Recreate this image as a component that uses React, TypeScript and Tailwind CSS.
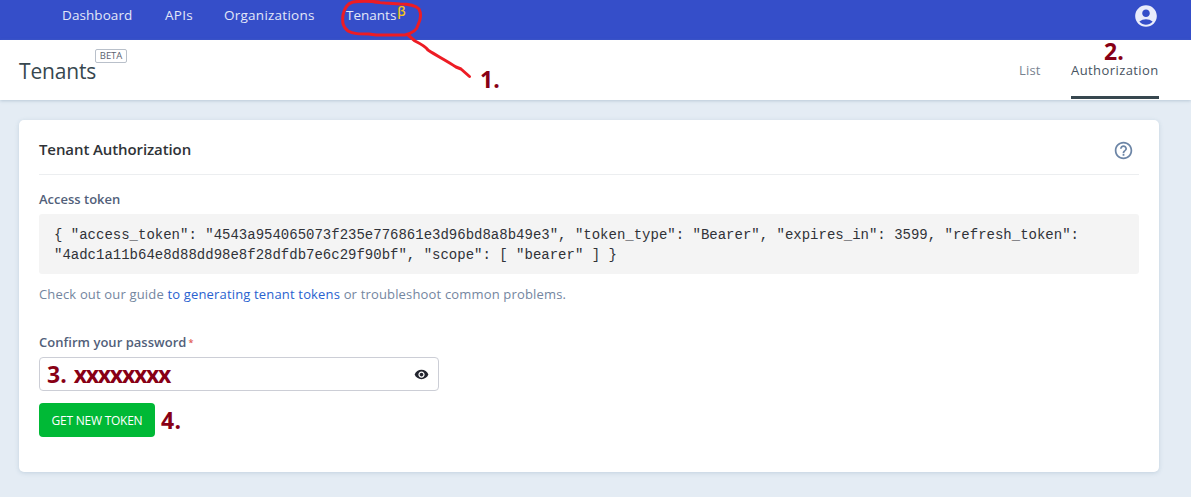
import { MdAccountCircle, MdHelpOutline, MdVisibility } from "react-icons/md";

const NOTE = "font-bold text-[#880015] whitespace-nowrap";

function Header() {
  return (
    <header className="relative h-10 bg-[#354ec9] text-[13.5px] leading-[18px] text-[#e3e7f8]">
      <nav className="flex h-[31px] items-center pl-[62px]">
        <a className="-mt-[2px] w-[103px] tracking-[0.08px]">Dashboard</a>
        <a className="-mt-[2px] w-[59px] tracking-[0.3px]">APIs</a>
        <a className="-mt-[2px] w-[122px] tracking-[0.25px]">Organizations</a>
        <a className="-mt-[2px] flex">
          Tenants
          <span className="-mt-[3px] ml-px text-[13px] leading-[17px] font-semibold text-[#f5c518]">β</span>
        </a>
        <MdAccountCircle className="ml-auto mr-[32px] size-[26px] text-[#e9ecfb]" />
      </nav>
      <svg
        className="absolute left-[320px] top-0 z-10"
        width="200"
        height="100"
        fill="none"
        stroke="#ed1c24"
        strokeWidth="3"
        strokeLinecap="round"
        strokeLinejoin="round"
      >
        <path d="M59 2C50 1 39 1 33 2C26 4 24 9 23 15C22 23 23 27 28 31C33 34 39 34 49 34L56 35L85 35C93 33 97 30 98 25C101 19 101 13 99 9C95 5 88 4 80 4L65 3L54 2" />
        <path d="M88 35L95 41C101 44 105 46 108 50C117 56 127 61 136 67L141 69L149.5 76.5" />
      </svg>
    </header>
  );
}

function TitleBar() {
  return (
    <div className="relative flex h-[60px] bg-white pl-[19px] pr-8 shadow-[0_1px_3px_rgba(120,150,175,0.4)]">
      <h1 className="mt-[16px] w-[77px] text-[21px] leading-[30px] font-medium tracking-[-0.15px] text-[#37474f]">
        Tenants
      </h1>
      <span className="-ml-px mt-[9px] flex h-[14px] w-8 items-center justify-center rounded-[2px] border border-[#b9c0ca] text-[9.5px] leading-3 tracking-[-0.1px] text-[#5b6270]">
        BETA
      </span>
      <span className={`absolute left-[480px] top-[24px] text-[23px] leading-[30px] ${NOTE}`}>1.</span>
      <div className="ml-auto flex text-[13px] leading-5">
        <a className="mr-[30px] w-[22px] pt-5 tracking-[0.2px] text-[#78828f]">List</a>
        <a className="h-[59px] w-[88px] border-b-3 border-[#37474f] pt-5 tracking-[0.42px] whitespace-nowrap text-[#47535f]">
          Authorization
        </a>
      </div>
      <span className={`absolute left-[1104px] top-[-4px] text-[23px] leading-[30px] ${NOTE}`}>2.</span>
    </div>
  );
}

export default function App() {
  return (
    <div className="h-[497px] w-[1191px] overflow-hidden bg-[#e4ecf4] font-['Open_Sans','Noto_Sans',sans-serif]">
      <Header />
      <TitleBar />
      <main className="ml-[19px] mt-5 flex h-[352px] w-[1140px] flex-col rounded-[5px] bg-white px-5 shadow-[0_1px_4px_rgba(120,150,175,0.3)]">
        <div className="flex h-[55px] items-center justify-between border-b border-[#eceef0] pt-[5px] pr-[5px]">
          <h2 className="text-[15px] font-semibold tracking-[-0.1px] text-[#2f3337]">Tenant Authorization</h2>
          <MdHelpOutline className="mt-px size-[21px] text-[#6c85a6]" />
        </div>
        <h3 className="mt-[14px] text-[13px] leading-5 font-semibold text-[#525f7a]">Access token</h3>
        <pre className="mt-[5px] h-[60px] rounded-[3px] bg-[#f4f4f4] px-[15px] pt-[11px] font-['Liberation_Mono',monospace] text-[14px] leading-5 text-[#303238]">
          {`{ "access_token": "4543a954065073f235e776861e3d96bd8a8b49e3", "token_type": "Bearer", "expires_in": 3599, "refresh_token":\n"4adc1a11b64e8d88dd98e8f28dfdb7e6c29f90bf", "scope": [ "bearer" ] }`}
        </pre>
        <p className="mt-[10px] text-[13px] leading-5 tracking-[0.165px] text-[#7486a0]">
          Check out our guide <a className="text-[#2962cf]">to generating tenant tokens</a> or troubleshoot common problems.
        </p>
        <label className="mt-[28px] text-[13px] leading-5 font-semibold tracking-[0.03px] text-[#525f7a]">
          Confirm your password<span className="ml-[2px] align-[1px] text-[9px] leading-3 text-[#e0574f]">*</span>
        </label>
        <div className="mt-[5px] flex h-[34px] w-[400px] items-center rounded-[4px] border border-[#ccced6] pl-[7px] pr-[9px]">
          <span className={`-mt-px text-[23px] leading-[30px] ${NOTE}`}>
            3. <span className="ml-px tracking-[-1.25px]">xxxxxxxx</span>
          </span>
          <MdVisibility className="ml-auto size-[15px] text-[#23252f]" />
        </div>
        <div className="mt-3 flex items-center">
          <button className="h-[34px] w-[116px] rounded-[4px] bg-[#00b936] pt-px text-[12px] tracking-[-0.25px] whitespace-nowrap text-white">
            GET NEW TOKEN
          </button>
          <span className={`ml-[6px] text-[23px] leading-[30px] tracking-[0.3px] ${NOTE}`}>4.</span>
        </div>
      </main>
    </div>
  );
}
